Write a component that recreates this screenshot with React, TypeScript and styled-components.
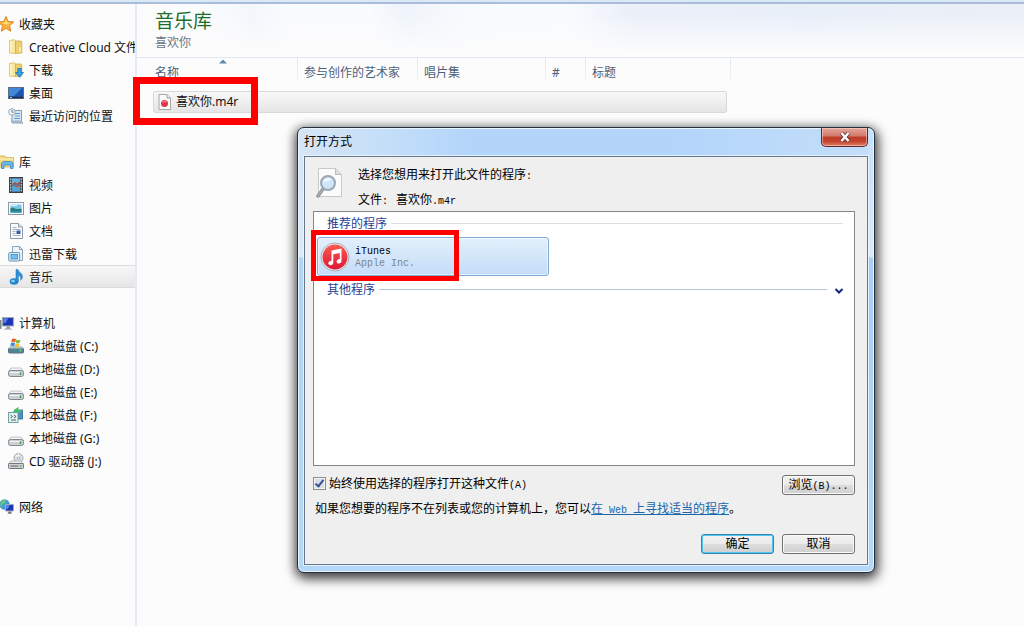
import React from 'react';
import styled, { createGlobalStyle } from 'styled-components';

const Global = createGlobalStyle`
  *, *::before, *::after { box-sizing: border-box; }
  body {
    margin: 0;
    background: #fcfcfc;
    color: #111;
    font: 12px/23px "Noto Sans", "Noto Sans CJK SC", sans-serif;
  }
`;

const Page = styled.div`
  display: flex;
  flex-direction: column;
  min-height: 100vh;
  position: relative;
  overflow: hidden;
`;

const TopEdge = styled.div`
  height: 4px;
  background: #dbe8f7;
  border-bottom: 2px solid #a9bdd6;
`;

const Body = styled.div`
  flex: 1;
  display: flex;
`;

const Sidebar = styled.nav`
  width: 137px;
  flex: none;
  padding-top: 8px;
  border-right: 2px solid #e3ebf4;
  display: flex;
  flex-direction: column;
  gap: 23px;
`;

const Group = styled.ul`
  list-style: none;
  margin: 0;
  padding: 0;
`;

const NavItem = styled.li<{ $root?: boolean; $selected?: boolean }>`
  height: 23px;
  padding-left: ${p => (p.$root ? 0 : 8)}px;
  overflow: hidden;
  border: solid ${p => (p.$selected ? '#dcdcdc' : 'transparent')};
  border-width: 1px 0;
  background: ${p => (p.$selected ? 'linear-gradient(#f7f7f7, #e6e6e6)' : 'none')};
`;

const NavLink = styled.a<{ $root?: boolean }>`
  display: flex;
  align-items: center;
  height: 21px;
  gap: ${p => (p.$root ? 3 : 5)}px;
  white-space: nowrap;
  color: inherit;
  text-decoration: none;
  svg { flex: none; }
`;

const NavLabel = styled.span`
  line-height: 19px;
  padding-top: 2px;
`;

const Main = styled.main`
  flex: 1;
  min-width: 0;
`;

const LibraryHeader = styled.header`
  height: 54px;
  padding: 4px 18px 0;
  border-bottom: 1px solid #dfe8f0;
  background:
    linear-gradient(to bottom, rgba(252, 252, 252, 0) 20%, #fcfcfc 95%),
    linear-gradient(75deg, #fcfcfc 0%, #f9fafd 11%, #f3f6fb 14%, #fafbfe 18%, #fafbfe 27%, #eff4fb 31%, #f8fafd 38%, #f9fbfe 49%, #ebf0f9 56%, #e9eff9 75%, #ebf0f7 100%);
`;

const LibraryTitle = styled.h1`
  margin: 0;
  font-size: 19px;
  line-height: 26px;
  font-weight: 400;
  color: #1d6f2a;
`;

const LibraryPath = styled.p`
  margin: 0;
  line-height: 17px;
  color: #6a7787;
`;

const FileTable = styled.table`
  display: block;
  width: 582px;
  margin-left: 12px;
  thead, tbody { display: block; }
`;

const ColumnRow = styled.tr`
  display: grid;
  grid-template-columns: 149px 120px 128px 40px 1fr;
  position: relative;
`;

const Column = styled.th`
  height: 22px;
  padding: 3px 6px 0;
  text-align: left;
  font-weight: 400;
  color: #4c607a;
  border-right: 1px solid;
  border-image: linear-gradient(#dfe7ef, #eff3f7) 1;
  white-space: nowrap;
`;

const SortMark = styled.svg`
  position: absolute;
  left: 70px;
  top: 1px;
`;

const FileRow = styled.tr`
  display: flex;
  position: relative;
  height: 22px;
  margin: 11px 4px 0;
  border: 1px solid #d9d9d9;
  border-radius: 2px;
  background: linear-gradient(#f8f8f8, #e5e5e5);
`;

const FileName = styled.td`
  display: flex;
  align-items: center;
  gap: 4px;
  padding: 0 4px;
  line-height: 20px;
`;

const Highlight = styled.span<{ $x: number; $y: number; $w: number; $h: number; $t: number }>`
  position: absolute;
  left: ${p => p.$x}px;
  top: ${p => p.$y}px;
  width: ${p => p.$w}px;
  height: ${p => p.$h}px;
  border: ${p => p.$t}px solid #fe0000;
  pointer-events: none;
`;

const Dialog = styled.section`
  position: absolute;
  left: 297px;
  top: 127px;
  width: 578px;
  padding: 0 6px 7px;
  border: 1px solid #25303b;
  border-radius: 7px;
  background:
    linear-gradient(to bottom, #d3e5f8 0, #dbe9f8 129px, #b0d3f6 130px, #b5d8f8 100%) left / 6px 100% no-repeat,
    linear-gradient(to bottom, #c5dffa 0, #dbe9fa 129px, #a9cdf4 130px, #b5d8f8 100%) right / 6px 100% no-repeat,
    linear-gradient(to right, #d6e5f5 0, #c6dff9 14%, #b3d5fa 30%, #b3d5fa 65%, #c4defa 100%) top / 100% 40px no-repeat,
    #b5d8f8;
  box-shadow: inset 0 0 0 1px #e8f4ff, 0 3px 11px 2px rgba(0, 0, 0, 0.65), 3px 5px 14px rgba(0, 0, 0, 0.3);
  font-family: "Liberation Mono", "Noto Sans CJK SC", monospace;
  color: #000;
  line-height: 16px;
`;

const TitleBar = styled.header`
  display: flex;
  justify-content: space-between;
  height: 28px;
  font-family: "Noto Sans", "Noto Sans CJK SC", sans-serif;
`;

const DialogTitle = styled.h2`
  margin: 0;
  font-size: 12px;
  line-height: 28px;
  font-weight: 400;
`;

const CloseButton = styled.button`
  width: 47px;
  height: 19px;
  padding: 0;
  display: flex;
  align-items: center;
  justify-content: center;
  border: 1px solid #5b2a2c;
  border-top: 0;
  border-radius: 0 0 5px 5px;
  background: linear-gradient(#e3a79d 0, #d2796b 45%, #bb3a27 50%, #c5452f 75%, #dd8064 100%);
  box-shadow: inset 0 0 0 1px rgba(255, 215, 205, 0.55);
`;

const Client = styled.div`
  border: 1px solid #66798c;
  outline: 1px solid rgba(238, 247, 255, 0.8);
  background: #efefef;
  padding: 9px 12px 10px 8px;
`;

const Intro = styled.div`
  display: flex;
  align-items: flex-start;
  gap: 14px;
  height: 45px;
  padding-left: 3px;
`;

const IntroText = styled.div`
  align-self: center;
  line-height: 24px;
`;

const Latin = styled.span`
  font-size: 10px;
`;

const Plain = styled.p`
  margin: 0;
  white-space: pre;
`;

const FileLine = styled(Plain)`
  display: flex;
  gap: 8px;
`;

const Hint = styled(Plain)`
  padding-left: 2px;
`;

const ProgramList = styled.div`
  height: 255px;
  border: 1px solid #838790;
  background: #fff;
  padding: 5px 11px 0 3px;
`;

const GroupHeading = styled.h3`
  display: flex;
  align-items: center;
  gap: 4px;
  margin: 0;
  padding-left: 10px;
  height: 16px;
  font-size: 12px;
  font-weight: 400;
  color: #1f3e92;
`;

const Rule = styled.span<{ $color: string }>`
  flex: 1;
  height: 1px;
  margin-bottom: 3px;
  background: ${p => p.$color};
`;

const Expand = styled.button`
  border: 0;
  padding: 0;
  margin-left: 4px;
  width: 8px;
  height: 10px;
  background: none;
  display: flex;
  align-items: center;
`;

const Program = styled.button`
  position: relative;
  display: flex;
  align-items: center;
  gap: 5px;
  width: 232px;
  height: 39px;
  margin: 4px 0 7px;
  padding: 0 2px;
  border: 1px solid #84acd9;
  border-radius: 3px;
  background: linear-gradient(#e3effb, #c4ddf8);
  box-shadow: inset 0 0 0 1px rgba(255, 255, 255, 0.5);
  font: 10px/12px "Liberation Mono", monospace;
  color: #000;
  text-align: left;
`;

const ProgramText = styled.span`
  display: flex;
  flex-direction: column;
  padding-top: 2px;
`;

const Vendor = styled.span`
  color: #7b8794;
`;

const OptionRow = styled.div`
  display: flex;
  justify-content: space-between;
  align-items: flex-start;
  margin-top: 9px;
  height: 27px;
`;

const AlwaysUse = styled.label`
  display: flex;
  align-items: flex-start;
  gap: 3px;
  padding-top: 2px;
  white-space: pre;
`;

const Tick = styled.input`
  appearance: none;
  width: 13px;
  height: 13px;
  margin: 0;
  border: 1px solid #8e8f8f;
  box-shadow: inset 0 0 0 1px #f4f4f4;
  background: #d9dee5;
  display: grid;
  place-items: center;
  &:checked::before {
    content: "";
    width: 5px;
    height: 9px;
    margin-bottom: 2px;
    border: solid #35508f;
    border-width: 0 2px 2px 0;
    transform: rotate(38deg);
  }
`;

const Button = styled.button<{ $default?: boolean }>`
  width: 73px;
  height: 20px;
  padding: 2px 0 0;
  border: 1px solid ${p => (p.$default ? '#3c7fb1' : '#707070')};
  border-radius: 3px;
  background: linear-gradient(#f2f2f2 0, #ebebeb 49%, #dddddd 50%, #cfcfcf 100%);
  box-shadow: inset 0 0 0 1px ${p => (p.$default ? '#4cc8f1' : '#fbfbfb')};
  font: 12px/16px "Liberation Mono", "Noto Sans CJK SC", monospace;
  color: #000;
  white-space: pre;
`;

const WebLink = styled.a`
  color: #1a66ad;
  text-decoration: underline;
`;

const Actions = styled.div`
  display: flex;
  justify-content: flex-end;
  gap: 8px;
  margin-top: 15px;
`;

type IconProps = { children: React.ReactNode };
const Icon = ({ children }: IconProps) => (
  <svg width="16" height="16" viewBox="0 0 16 16" aria-hidden="true">{children}</svg>
);

const StarIcon = () => (
  <Icon><path d="M6 .5l2.200 5 5.500.5-4.200 3.700 1.300 5.500L6 12.300 1.300 15.200l1.200-5.400L-2 6l5.800-.5z" fill="#fbb03b" stroke="#dc8224" strokeWidth="1" /><path d="M6 3l1.300 3.500 3.700.4-5 1.600-4.500-1.500 3.300-.5z" fill="#ffdc7a" /></Icon>
);
const FolderShape = () => (
  <>
    <path d="M1.500 1.500l5-.8 1 1v12.800l-6-.5z" fill="#f8e7a0" stroke="#d9bd5e" strokeWidth=".8" />
    <path d="M7.500 2h5.500l.8.8v11.200l-6.300.5z" fill="#edcf72" stroke="#cfae4b" strokeWidth=".8" />
    <path d="M3 2v11.500" stroke="#fff8d4" strokeWidth="1.200" />
    <path d="M12 8v5" stroke="#fff3bd" strokeWidth="1.300" />
  </>
);
const FolderIcon = () => <Icon><FolderShape /></Icon>;
const DownloadIcon = () => (
  <Icon><FolderShape /><path d="M9.800 6.500h3.400v4h2.300l-4 4.800-4-4.800h2.300z" fill="#35a0e2" stroke="#1c6fb5" strokeWidth=".8" /></Icon>
);
const DesktopIcon = () => (
  <Icon><rect x=".5" y="2.500" width="15" height="11" fill="#1f57b0" stroke="#5b6d84" /><path d="M1 3h13L6 11H1z" fill="#4287d8" /><path d="M1 12.500h14" stroke="#1e2f4d" strokeWidth="1.500" /><path d="M2 12.500h2" stroke="#8fdcf2" /></Icon>
);
const RecentIcon = () => (
  <Icon><path d="M5 2.500h8.500v11l1.500 1.500H4.500L3.500 13z" fill="#d9e7f2" stroke="#8499ad" /><path d="M7 5.500h5M7 8h5M6 10.500h6" stroke="#5a9bd0" /><circle cx="4" cy="4" r="3.300" fill="#f3f6f9" stroke="#9aa7b3" /><path d="M4 2v2.200h1.700" stroke="#4a5a6a" fill="none" strokeWidth=".8" /><path d="M3 13.500h11" stroke="#9fb4c6" strokeWidth="2" /></Icon>
);
const LibraryIcon = () => (
  <Icon><path d="M-1 2h6l1 1.500h7.500V13H-1z" fill="#f2d981" stroke="#d2b257" strokeWidth=".8" /><path d="M0 5h13" stroke="#fff5c8" /><path d="M1.500 14.500V9l2-1.500h7.500l2 1.500v5.500h-2.500V11H4v3.500z" fill="#6db9e8" stroke="#3c87c3" strokeWidth=".8" /></Icon>
);
const VideoIcon = () => (
  <Icon><rect x="1.500" y=".5" width="13" height="15" fill="#4b545b" stroke="#3a4248" /><rect x="4" y="1.500" width="8" height="6" fill="#60b5e6" /><rect x="4" y="8.500" width="8" height="6" fill="#4fa6dd" /><path d="M4 7l3-2 2 1.500 3-2V7.500H4z" fill="#bc4936" /><path d="M4 9h8l-3 2-2-1.500z" fill="#cc624c" /><path d="M2.700 1.500v13M13.300 1.500v13" stroke="#e7eef2" strokeDasharray="1.500 1.300" /></Icon>
);
const PictureIcon = () => (
  <Icon><rect x=".5" y="2.500" width="15" height="12" fill="#fbfcfd" stroke="#8b99a5" /><rect x="2.500" y="4.500" width="11" height="8" fill="#76c6ea" /><path d="M2.500 8c3-1 5 1 7 1.200l4-.7v4h-11z" fill="#2d7b71" /><path d="M2.500 11.200h11v1.300h-11z" fill="#2a9acb" /><path d="M3 5.500h6" stroke="#d7f3fc" strokeWidth="1.200" /></Icon>
);
const DocumentIcon = () => (
  <Icon><path d="M2.500.5h8l4 3.500v11.500h-12z" fill="#f8fafc" stroke="#8e9baa" /><path d="M10.500.5V4h4" fill="#dde6ee" stroke="#8e9baa" /><path d="M4.500 4.500h4M4.500 6.500h8M4.500 8.500h3M4.500 10.500h3M4.500 12.500h8" stroke="#9daab8" strokeWidth=".9" /><rect x="8.500" y="7.500" width="4" height="3.500" fill="#315fa8" /></Icon>
);
const StackIcon = () => (
  <Icon><path d="M4.500.500h7l3 3v11h-10z" fill="#eff5fa" stroke="#8ba3b8" /><path d="M11.500.500v3h3" fill="none" stroke="#8ba3b8" /><rect x=".7" y="6.500" width="11" height="8.500" rx="1" fill="#d9ebf7" stroke="#6e94b4" /><rect x="3" y="8.500" width="6.500" height="4.500" fill="#74bff0" stroke="#3c8dc8" strokeWidth=".8" /></Icon>
);
const MusicIcon = () => (
  <Icon><ellipse cx="6" cy="12.500" rx="4.300" ry="3.200" fill="#2587cf" /><ellipse cx="5" cy="12" rx="2" ry="1.200" fill="#7ecbf3" /><path d="M8 13V.500h2c.3 2.800 4.500 3.800 4.500 7 0 1.600-1 3-2 3.800.9-2.800-.2-4.500-2.200-5.100V13z" fill="#2f91d6" stroke="#1b6fb4" strokeWidth=".5" /></Icon>
);
const MonitorShape = () => (
  <>
    <path d="M2.500 2.500h11v8.500h-11z" fill="#1a35b5" stroke="#a3aab5" strokeWidth="1.200" />
    <path d="M3.300 3.200h5L5.500 8H3.300z" fill="#5b7ee6" />
    <path d="M7 11.500h2.500l1 2.500H5.500z" fill="#8d949e" /><path d="M4 14.200h8" stroke="#b8bdc6" strokeWidth="1.200" />
  </>
);
const ComputerIcon = () => <Icon><path d="M0 5v9h1.500V5z" fill="#7e858d" /><path d="M0 9.500h1.500" stroke="#49b95a" /><MonitorShape /></Icon>;
const DriveShape = () => (
  <>
    <path d="M3 6h10l2.500 3.500H.5z" fill="#f3f4f5" stroke="#b4b8bc" strokeWidth=".8" />
    <rect x=".5" y="8.500" width="15" height="6" rx="2" fill="#cdd0d3" stroke="#83888d" />
    <path d="M2 10.500h10" stroke="#f4f5f6" /><path d="M12.500 10.500v2.500" stroke="#36a047" strokeWidth="1.500" />
  </>
);
const DriveIcon = () => <Icon><g transform="translate(0 1)"><DriveShape /></g></Icon>;
const SystemDriveIcon = () => (
  <Icon><rect x=".5" y="10" width="15" height="5" rx="1" fill="#4d8496" stroke="#5f6f78" /><path d="M2.500 8h11l2 2.500H.5z" fill="#b4c6cc" /><path d="M12.500 11.500v2" stroke="#72e079" strokeWidth="1.500" /><path d="M4 1c1.500-1 3-.5 4 .2L7.200 4.500c-1.300-.8-2.600-.8-4-.2z" fill="#ea5b2c" /><path d="M8.500 1.500c1.300.8 2.500.8 4 .2l-1 3.300c-1.400.6-2.600.5-3.900-.2z" fill="#7dbb34" /><path d="M3 5c1.400-.6 2.700-.6 4 .2l-.8 3.300c-1.300-.8-2.600-.8-4-.2z" fill="#3a8cd5" /><path d="M7.500 5.500c1.300.8 2.600.8 4 .2l-.9 3.300c-1.400.6-2.600.5-3.900-.2z" fill="#f6be27" /></Icon>
);
const ArchiveDriveIcon = () => (
  <Icon><rect x="7" y="3" width="7.500" height="9" fill="#4b8fc5" stroke="#2f6796" strokeWidth=".8" /><path d="M5 5c1-3 4-4 6-5l-1 3h4l-3 3-3-.5z" fill="#43c263" /><rect x=".5" y="5.500" width="9.500" height="10" fill="#e6f2ef" stroke="#6aa5a4" /><path d="M2.500 8l2 1.500-2 1.500m3.500-3l2 1.500-2 1.500M3 13h5" stroke="#4b5e66" fill="none" /></Icon>
);
const CdDriveIcon = () => (
  <Icon><circle cx="10.500" cy="5" r="4.500" fill="#dfe3e6" stroke="#91979d" strokeWidth=".8" /><circle cx="10.500" cy="5" r="1.300" fill="#fff" stroke="#858b91" strokeWidth=".7" /><path d="M10.500.5v3M8 2l1.500 2" stroke="#fff" /><path d="M3 8h10l2.500 3H.5z" fill="#eeeff0" stroke="#a0a4a8" strokeWidth=".7" /><rect x=".5" y="10.500" width="15" height="5" rx="1" fill="#d0d2d5" stroke="#72777c" /><path d="M2.500 13h8" stroke="#5c6166" /><path d="M12.800 12v2" stroke="#36a047" /></Icon>
);
const NetworkIcon = () => (
  <Icon><circle cx="4.500" cy="5.500" r="4.800" fill="#3d9ed8" stroke="#2679b5" strokeWidth=".6" /><path d="M1 3c2-2.500 4-2 5-1.500L5 4 3 5 1 8c-1-2-1-3 0-5z" fill="#6cc873" /><path d="M5.500 5.500h8v6.500h-8z" fill="#1a35b5" stroke="#a3aab5" /><path d="M6 6h4L7.500 10H6z" fill="#5b7ee6" /><path d="M8.500 12.500h2.500l1 2.300H7.500z" fill="#757c86" /></Icon>
);
const MediaFileIcon = () => (
  <svg width="14" height="16" viewBox="0 0 14 16" aria-hidden="true"><path d="M1 .5h8l3.500 3.500v11.500H1z" fill="#fbfbfb" stroke="#a6a6a6" /><path d="M9 .5V4h3.500" fill="#e4e4e4" stroke="#a6a6a6" /><circle cx="6.500" cy="9.500" r="3.500" fill="#e0344a" /><path d="M4.500 8.500c1-1.500 3-1.500 4-.5" stroke="#f58b96" fill="none" strokeWidth="1.200" /></svg>
);
const SearchPageIcon = () => (
  <svg width="28" height="32" viewBox="0 0 28 32" aria-hidden="true"><path d="M2.500 2.500h17l6 6v22h-23z" fill="#fbfbfb" stroke="#c8c8c8" /><path d="M19.500 2.500v6h6" fill="#dcdcdc" stroke="#bdbdbd" /><path d="M7 23l-5 7" stroke="#8a8f95" strokeWidth="3.400" strokeLinecap="round" /><path d="M7 23l-5 7" stroke="#b7bbc0" strokeWidth="1.200" strokeLinecap="round" /><circle cx="12" cy="17" r="7" fill="#cfe6fa" stroke="#9ba6b3" strokeWidth="2" /><path d="M7.500 16c1-4 6-5 8.500-2-3-.5-5 2-8.500 2z" fill="#f4faff" /></svg>
);
const ITunesIcon = () => (
  <svg width="30" height="30" viewBox="0 0 30 30" aria-hidden="true"><defs><linearGradient id="disc" x1="0" y1="0" x2="0" y2="1"><stop offset="0" stopColor="#fb5b50" /><stop offset="1" stopColor="#dd1737" /></linearGradient></defs><circle cx="15" cy="15" r="14" fill="#eceef1" stroke="#a9aeb6" /><circle cx="15" cy="15" r="12.500" fill="url(#disc)" /><path d="M11.500 8.500l10-2v12.200c0 1.800-1.200 2.800-2.700 2.800-1.300 0-2.200-.7-2.200-1.800 0-1.500 1.200-2.200 3.200-2.600V11l-6.500 1.300v8c0 1.800-1.200 2.900-2.800 2.900-1.300 0-2.200-.8-2.200-1.900 0-1.500 1.200-2.200 3.200-2.600z" fill="#fff" /></svg>
);

type Entry = { label: string; icon: React.ComponentType; selected?: boolean };
const groups: Entry[][] = [
  [
    { label: '收藏夹', icon: StarIcon },
    { label: 'Creative Cloud 文件', icon: FolderIcon },
    { label: '下载', icon: DownloadIcon },
    { label: '桌面', icon: DesktopIcon },
    { label: '最近访问的位置', icon: RecentIcon },
  ],
  [
    { label: '库', icon: LibraryIcon },
    { label: '视频', icon: VideoIcon },
    { label: '图片', icon: PictureIcon },
    { label: '文档', icon: DocumentIcon },
    { label: '迅雷下载', icon: StackIcon },
    { label: '音乐', icon: MusicIcon, selected: true },
  ],
  [
    { label: '计算机', icon: ComputerIcon },
    { label: '本地磁盘 (C:)', icon: SystemDriveIcon },
    { label: '本地磁盘 (D:)', icon: DriveIcon },
    { label: '本地磁盘 (E:)', icon: DriveIcon },
    { label: '本地磁盘 (F:)', icon: ArchiveDriveIcon },
    { label: '本地磁盘 (G:)', icon: DriveIcon },
    { label: 'CD 驱动器 (J:)', icon: CdDriveIcon },
  ],
  [{ label: '网络', icon: NetworkIcon }],
];

const columns = ['名称', '参与创作的艺术家', '唱片集', '#', '标题'];

export default function App() {
  return (
    <Page>
      <Global />
      <TopEdge />
      <Body>
        <Sidebar>
          {groups.map(items => (
            <Group key={items[0].label}>
              {items.map(({ label, icon: Glyph, selected }, i) => (
                <NavItem key={label} $root={i === 0} $selected={selected}>
                  <NavLink href="#" $root={i === 0}><Glyph /><NavLabel>{label}</NavLabel></NavLink>
                </NavItem>
              ))}
            </Group>
          ))}
        </Sidebar>
        <Main>
          <LibraryHeader>
            <LibraryTitle>音乐库</LibraryTitle>
            <LibraryPath>喜欢你</LibraryPath>
          </LibraryHeader>
          <FileTable>
            <thead>
              <ColumnRow>
                {columns.map((name, i) => (
                  <Column key={name}>
                    {name}
                    {i === 0 && <SortMark width="8" height="5" viewBox="0 0 8 5"><path d="M0 4.500L4 .5l4 4z" fill="#5d88a8" /></SortMark>}
                  </Column>
                ))}
              </ColumnRow>
            </thead>
            <tbody>
              <FileRow>
                <FileName>
                  <MediaFileIcon />喜欢你.m4r
                  <Highlight $x={-21} $y={-15} $w={125} $h={48} $t={7} />
                </FileName>
              </FileRow>
            </tbody>
          </FileTable>
        </Main>
      </Body>

      <Dialog role="dialog" aria-labelledby="dialog-title">
        <TitleBar>
          <DialogTitle id="dialog-title">打开方式</DialogTitle>
          <CloseButton aria-label="关闭">
            <svg width="12" height="10" viewBox="0 0 12 10"><path d="M2.500 1l7 8M9.500 1l-7 8" stroke="#5f3a42" strokeWidth="4" /><path d="M2.500 1l7 8M9.500 1l-7 8" stroke="#fff" strokeWidth="2.400" /></svg>
          </CloseButton>
        </TitleBar>
        <Client>
          <Intro>
            <SearchPageIcon />
            <IntroText>
              <Plain>选择您想用来打开此文件的程序<Latin>:</Latin></Plain>
              <FileLine><span>文件<Latin>:</Latin></span><span>喜欢你<Latin>.m4r</Latin></span></FileLine>
            </IntroText>
          </Intro>
          <ProgramList>
            <GroupHeading>推荐的程序<Rule $color="#dcdfe6" /></GroupHeading>
            <Program>
              <ITunesIcon />
              <ProgramText>
                <span>iTunes</span>
                <Vendor>Apple Inc.</Vendor>
              </ProgramText>
              <Highlight $x={-7} $y={-8} $w={148} $h={51} $t={5} />
            </Program>
            <GroupHeading>
              其他程序<Rule $color="#b9c3d9" />
              <Expand aria-label="展开">
                <svg width="8" height="6" viewBox="0 0 8 6"><path d="M.5 1L4 4.500 7.500 1" fill="none" stroke="#14287e" strokeWidth="2" /></svg>
              </Expand>
            </GroupHeading>
          </ProgramList>
          <OptionRow>
            <AlwaysUse>
              <Tick type="checkbox" defaultChecked />
              <span>始终使用选择的程序打开这种文件<Latin>(A)</Latin></span>
            </AlwaysUse>
            <Button>浏览<Latin>(B)...</Latin></Button>
          </OptionRow>
          <Hint>
            如果您想要的程序不在列表或您的计算机上，您可以<WebLink href="#">在<Latin> Web </Latin>上寻找适当的程序</WebLink>。
          </Hint>
          <Actions>
            <Button $default>确定</Button>
            <Button>取消</Button>
          </Actions>
        </Client>
      </Dialog>
    </Page>
  );
}
